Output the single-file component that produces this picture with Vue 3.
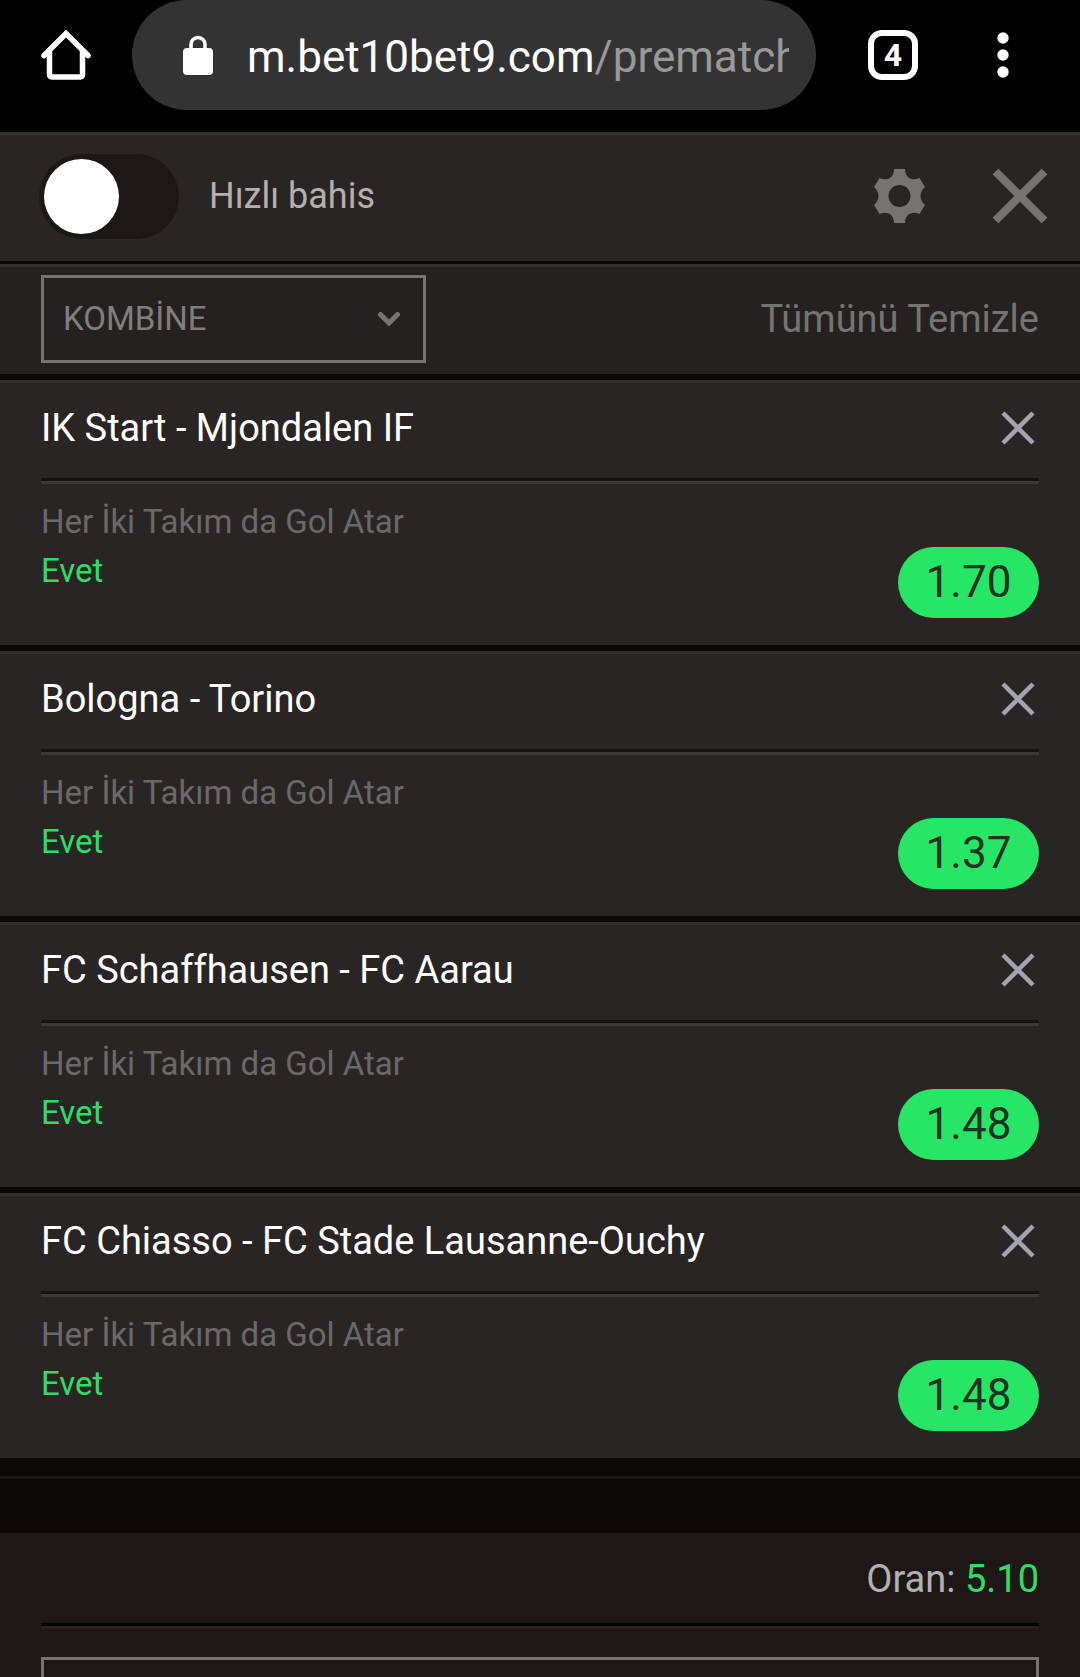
<template>
  <div class="page">
    <header class="browser">
      <button type="button" class="icon-btn" aria-label="Home">
        <svg width="50" height="50" viewBox="0 0 50 50" fill="none" stroke="#fff" stroke-linecap="round">
          <path d="M3 25.5 25 3.5l22 22" stroke-width="5.5" stroke-linejoin="miter" />
          <path d="M8.500 22v23a2 2 0 0 0 2 2h29a2 2 0 0 0 2-2V22" stroke-width="5.500" />
        </svg>
      </button>
      <button type="button" class="address">
        <svg class="address__lock" width="30" height="40" viewBox="0 0 30 40">
          <path d="M8 15V9.500a7 7 0 0 1 14 0V15" fill="none" stroke="#fff" stroke-width="3.600" />
          <rect y="13" width="30" height="27" rx="4" fill="#fff" />
        </svg>
        <span class="address__url">{{ host }}<span class="address__path">{{ path }}</span></span>
      </button>
      <button type="button" class="tabs" aria-label="Tabs">{{ tabCount }}</button>
      <button type="button" class="icon-btn" aria-label="Menu">
        <svg width="12" height="46" viewBox="0 0 12 46" fill="#fff">
          <circle cx="6" cy="6" r="5.700" />
          <circle cx="6" cy="23" r="5.700" />
          <circle cx="6" cy="40" r="5.700" />
        </svg>
      </button>
    </header>

    <section class="quick">
      <label class="quick__label">
        <input v-model="quickBet" type="checkbox" class="switch" />
        Hızlı bahis
      </label>
      <div class="quick__actions">
        <button type="button" class="icon-btn" aria-label="Ayarlar">
          <svg width="51" height="54" viewBox="0 0 51 54" fill="#757473">
            <path
              fill-rule="evenodd"
              d="M20 0h11c0 9 7 12.500 14.500 9L51 18c-6 5-6 13 0 18l-5.500 9C38 41.500 31 45 31 54H20c0-9-7-12.500-14.500-9L0 36c6-5 6-13 0-18l5.500-9C13 12.500 20 9 20 0ZM25.500 16a11 11 0 1 0 0 22a11 11 0 1 0 0-22Z"
            />
          </svg>
        </button>
        <button type="button" class="icon-btn" aria-label="Kapat">
          <svg width="56" height="56" viewBox="0 0 56 56" stroke="#757473" stroke-width="8">
            <path d="M3.500 3.500l49 49M52.500 3.500l-49 49" />
          </svg>
        </button>
      </div>
    </section>

    <section class="filter">
      <div class="picker">
        <select v-model="betType" class="picker__select" aria-label="Bahis türü">
          <option value="single">TEKLİ</option>
          <option value="combo">KOMBİNE</option>
          <option value="system">SİSTEM</option>
        </select>
        <span class="picker__arrow">
          <svg width="24" height="16" viewBox="0 0 24 16" fill="none" stroke="#757473" stroke-width="5" stroke-linecap="round">
            <path d="M3.500 3.500l8.500 8.500l8.500-8.500" />
          </svg>
        </span>
      </div>
      <button type="button" class="filter__clear" @click="bets = []">Tümünü Temizle</button>
    </section>

    <main class="bets">
      <article v-for="bet in bets" :key="bet.id" class="bet">
        <div class="bet__head">
          <span class="bet__match">{{ bet.match }}</span>
          <button type="button" class="icon-btn" aria-label="Sil" @click="removeBet(bet.id)">
            <svg width="34" height="34" viewBox="0 0 34 34" stroke="#a3a4ad" stroke-width="4.500">
              <path d="M2 2l30 30M32 2L2 32" />
            </svg>
          </button>
        </div>
        <div class="bet__body">
          <div class="bet__info">
            <div class="bet__market">{{ bet.market }}</div>
            <div class="bet__pick">{{ bet.pick }}</div>
          </div>
          <span class="bet__odd">{{ bet.odd.toFixed(2) }}</span>
        </div>
      </article>
    </main>

    <div class="gap"></div>

    <footer class="summary">
      <div class="summary__total">Oran: <span class="summary__value">{{ totalOdd }}</span></div>
      <input v-model="stake" type="text" class="summary__stake" aria-label="Miktar" />
    </footer>
  </div>
</template>

<script setup>
import { ref } from 'vue'

const host = 'm.bet10bet9.com'
const path = '/prematch'
const tabCount = 4

const quickBet = ref(false)
const betType = ref('combo')
const stake = ref('')

const totalOdd = ref('5.10')

const bets = ref([
  { id: 1, match: 'IK Start - Mjondalen IF', market: 'Her İki Takım da Gol Atar', pick: 'Evet', odd: 1.7 },
  { id: 2, match: 'Bologna - Torino', market: 'Her İki Takım da Gol Atar', pick: 'Evet', odd: 1.37 },
  { id: 3, match: 'FC Schaffhausen - FC Aarau', market: 'Her İki Takım da Gol Atar', pick: 'Evet', odd: 1.48 },
  { id: 4, match: 'FC Chiasso - FC Stade Lausanne-Ouchy', market: 'Her İki Takım da Gol Atar', pick: 'Evet', odd: 1.48 },
])

function removeBet(id) {
  bets.value = bets.value.filter((b) => b.id !== id)
}
</script>

<style>
body {
  margin: 0;
  background: #0c0807;
}
</style>

<style scoped>
.page {
  display: flex;
  flex-direction: column;
  height: 100vh;
  overflow: hidden;
  background: #0c0807;
  color: #b2b1b0;
  font-family: Roboto, sans-serif;
}

.page > * {
  flex-shrink: 0;
}

button,
select,
input {
  font-family: inherit;
  margin: 0;
  box-sizing: border-box;
}

button {
  padding: 0;
  border: none;
  background: none;
  cursor: pointer;
}

svg {
  display: block;
}

.icon-btn {
  flex-shrink: 0;
}

/* browser bar */
.browser {
  display: flex;
  align-items: center;
  padding: 0 71px 22px 41px;
  background: #000;
}

.address {
  display: flex;
  align-items: center;
  flex: 1;
  min-width: 0;
  height: 110px;
  margin: 0 52px 0 41px;
  padding: 0 27px 0 51px;
  border-radius: 55px;
  background: #333;
}

.address__lock {
  flex-shrink: 0;
  margin-right: 34px;
}

.address__url {
  flex: 1;
  min-width: 0;
  padding-top: 4px;
  overflow: hidden;
  white-space: nowrap;
  text-align: left;
  font-size: 44px;
  line-height: 60px;
  color: #fff;
}

.address__path {
  color: #999;
}

.tabs {
  width: 50px;
  height: 50px;
  margin-right: 79px;
  border: 6px solid #fff;
  border-radius: 14px;
  color: #fff;
  font-size: 32px;
  font-weight: 700;
  line-height: 38px;
}

/* quick bet row */
.quick {
  display: flex;
  align-items: center;
  justify-content: space-between;
  height: 122px;
  padding: 0 32px 4px 39px;
  border-top: 3px solid #332f2e;
  border-bottom: 3px solid #0c0807;
  background: #292524;
}

.quick__label {
  display: flex;
  align-items: center;
  gap: 30px;
  font-size: 36px;
}

.switch {
  appearance: none;
  width: 140px;
  height: 85px;
  padding: 5px;
  border-radius: 43px;
  background: #1d1817;
  cursor: pointer;
}

.switch::before {
  content: '';
  display: block;
  width: 75px;
  height: 75px;
  border-radius: 50%;
  background: #fff;
}

.switch:checked::before {
  margin-left: auto;
}

.quick__actions {
  display: flex;
  align-items: center;
  gap: 67px;
}

/* bet type row */
.filter {
  display: flex;
  align-items: center;
  justify-content: space-between;
  height: 103px;
  padding: 0 41px 4px;
  border-top: 3px solid #332f2e;
  background: #242120;
}

.picker {
  position: relative;
  width: 385px;
}

.picker__select {
  appearance: none;
  display: block;
  width: 100%;
  height: 88px;
  padding: 0 76px 0 19px;
  border: 3px solid #757473;
  border-radius: 0;
  background: transparent;
  color: #807f7e;
  font-size: 33px;
}

.picker__arrow {
  position: absolute;
  top: 19px;
  right: 3px;
  display: flex;
  align-items: center;
  justify-content: center;
  width: 68px;
  height: 50px;
  border-left: 3px solid #232224;
  pointer-events: none;
}

.filter__clear {
  color: #757473;
  font-size: 38px;
}

/* bets */
.bet {
  height: 262px;
  padding: 0 41px;
  margin-top: 6px;
  border-top: 3px solid #332f2e;
  background: #292524;
}

.bet__head {
  display: flex;
  align-items: center;
  justify-content: space-between;
  height: 89px;
  padding: 0 4px 6px 0;
  border-bottom: 3px solid #161312;
}

.bet__match {
  color: #fff;
  font-size: 38px;
  line-height: 46px;
}

.bet__body {
  display: flex;
  justify-content: space-between;
  align-items: flex-start;
  padding-top: 12px;
  border-top: 3px solid #3b3837;
}

.bet__info {
  padding-top: 1px;
  font-size: 33px;
  line-height: 49px;
}

.bet__market {
  color: #6b6968;
}

.bet__pick {
  color: #2fdd65;
}

.bet__odd {
  width: 141px;
  margin-top: 51px;
  border-radius: 36px;
  background: #28e665;
  color: #1f3325;
  font-size: 44px;
  line-height: 71px;
  text-align: center;
}

.gap {
  height: 54px;
  margin-top: 18px;
  border-top: 3px solid #1b1716;
}

/* summary */
.summary {
  padding: 0 41px;
  background: #1d1817;
}

.summary__total {
  height: 90px;
  border-bottom: 3px solid #050202;
  box-shadow: 0 3px #252120;
  font-size: 38px;
  line-height: 92px;
  text-align: right;
}

.summary__value {
  color: #2fdd65;
}

.summary__stake {
  display: block;
  width: 100%;
  height: 88px;
  margin-top: 31px;
  padding: 0 21px;
  border: 3px solid #757473;
  border-radius: 0;
  background: transparent;
  color: #b2b1b0;
  font-size: 33px;
}
</style>
